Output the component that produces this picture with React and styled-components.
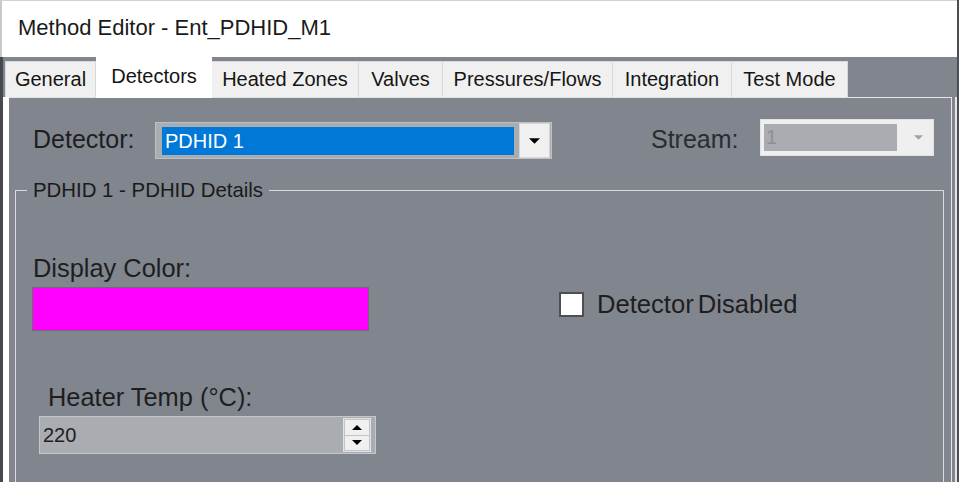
import React from 'react';
import styled, { createGlobalStyle } from 'styled-components';

const Global = createGlobalStyle`
  html, body { margin: 0; padding: 0; background: #80858e; }
  body { font-family: "Liberation Sans", Arial, sans-serif; color: #1f1f1f; }
  * { box-sizing: border-box; }
`;

const Window = styled.div`
  width: 959px;
  height: 482px;
  overflow: hidden;
  display: flex;
  flex-direction: column;
  background: #80858e;
  border-right: 2px solid #4b4e53;
`;

const TitleBar = styled.div`
  height: 57px;
  flex: none;
  background: #ffffff;
  border-top: 1px solid #d2d2d2;
  border-left: 2px solid #c9c9c9;
  display: flex;
  align-items: center;
  padding: 0 0 2px 16px;
  font-size: 22px;
  color: #1a1a1a;
`;

const Body = styled.div`
  flex: 1;
  display: flex;
  flex-direction: column;
  border-left: 3px solid #45494f;
  min-height: 0;
`;

const TabStrip = styled.div`
  height: 40px;
  flex: none;
  display: flex;
  align-items: flex-end;
  padding-left: 2px;
`;

const Tab = styled.div`
  position: relative;
  z-index: ${(p) => (p.$active ? 2 : 1)};
  width: ${(p) => p.$w}px;
  height: ${(p) => (p.$active ? 41 : 36)}px;
  margin-bottom: ${(p) => (p.$active ? -1 : 0)}px;
  background: ${(p) => (p.$active ? '#ffffff' : '#f0f0f0')};
  border: 1px solid ${(p) => (p.$active ? '#ffffff' : '#d9d9d9')};
  border-bottom: none;
  border-left-width: ${(p) => (p.$first || p.$active ? 1 : 0)}px;
  text-align: center;
  font-size: 20px;
  line-height: ${(p) => (p.$active ? 36 : 35)}px;
  color: #151515;
  white-space: nowrap;
`;

const PageArea = styled.div`
  flex: 1;
  display: flex;
  border-left: 6px solid #ffffff;
  border-right: 2px solid #e4e4e4;
  padding-right: 3px;
  min-height: 0;
`;

const Page = styled.div`
  flex: 1;
  display: flex;
  flex-direction: column;
  border-top: 1px solid #e4e4e4;
  border-right: 1px solid #e4e4e4;
  padding: 21px 0 0 6px;
  min-height: 0;
`;

const TopRow = styled.div`
  display: flex;
  align-items: flex-start;
  height: 41px;
  margin-left: 18px;
  flex: none;
`;

const FieldLabel = styled.div`
  width: ${(p) => p.$w}px;
  margin-left: ${(p) => p.$ml || 0}px;
  font-size: 25px;
  line-height: 40px;
  color: ${(p) => p.$color || '#1e1e1e'};
  white-space: nowrap;
`;

const Combo = styled.div`
  width: 397px;
  height: 37px;
  margin-top: 3px;
  display: flex;
  align-items: stretch;
  background: #a9acb1;
  border: 1px solid #bdc0c4;
  padding: 0 1px 0 6px;
`;

const SelectedField = styled.div`
  flex: 1;
  margin: 4px 5px 3px 0;
  background: #0078d7;
  color: #ffffff;
  font-size: 20px;
  line-height: 28px;
  padding-left: 3px;
`;

const DropButton = styled.div`
  width: 31px;
  background: #f0f0f0;
  border: 1px solid #d6d6d6;
  display: flex;
  align-items: center;
  justify-content: center;
`;

const StreamCombo = styled.div`
  width: 174px;
  height: 37px;
  display: flex;
  align-items: stretch;
  background: #efefef;
  border: 1px solid #e2e2e2;
  padding: 4px 0 4px 3px;
`;

const DisabledField = styled.div`
  width: 133px;
  background: #a9acb1;
  color: #8e9196;
  font-size: 20px;
  line-height: 27px;
  padding-left: 2px;
`;

const StreamArrow = styled.div`
  flex: 1;
  display: flex;
  align-items: center;
  justify-content: center;
  padding-left: 6px;
`;

const GroupBox = styled.fieldset`
  margin: 18px 0 0 0;
  padding: 0;
  width: 929px;
  flex: 1;
  min-width: 0;
  border: 1px solid #d9dadc;
  border-bottom: none;
`;

const GroupTitle = styled.legend`
  margin-left: 11px;
  padding: 0 6px;
  font-size: 20.4px;
  line-height: 24px;
  color: #1a1a1a;
`;

const GroupContent = styled.div`
  padding-left: 16px;
`;

const ColorRow = styled.div`
  display: flex;
  margin-top: 52px;
`;

const Column = styled.div`
  display: flex;
  flex-direction: column;
  margin-left: ${(p) => p.$ml || 0}px;
`;

const SectionLabel = styled.div`
  font-size: 25.4px;
  line-height: 28px;
  color: #1e1e1e;
  padding-left: ${(p) => p.$pl || 0}px;
  white-space: nowrap;
`;

const ColorSwatch = styled.div`
  width: 337px;
  height: 44px;
  margin-top: 5px;
  background: ${(p) => p.$color};
  border: 1px solid #6a6c70;
`;

const CheckRow = styled.label`
  display: flex;
  align-items: center;
  margin-left: 190px;
  padding-top: 36px;
  height: 64px;
`;

const CheckBox = styled.span`
  width: 25px;
  height: 25px;
  background: #ffffff;
  border: 2px solid #4d4f53;
  margin-right: 13px;
  flex: none;
`;

const CheckText = styled.span`
  font-size: 25.6px;
  line-height: 28px;
  color: #1e1e1e;
  word-spacing: -3px;
`;

const HeaterBlock = styled(Column)`
  margin-top: 52px;
  margin-left: 7px;
`;

const Numeric = styled.div`
  width: 337px;
  height: 38px;
  margin-top: 5px;
  display: flex;
  align-items: center;
  background: #a9acb1;
  border: 1px solid #c3c6ca;
  padding: 0 4px 0 3px;
`;

const NumericValue = styled.div`
  flex: 1;
  font-size: 20px;
  color: #1e1e1e;
`;

const Spin = styled.div`
  width: 28px;
  height: 34px;
  display: flex;
  flex-direction: column;
  border: 1px solid #e2e2e2;
  background: #f0f0f0;
`;

const SpinButton = styled.div`
  flex: 1;
  display: flex;
  align-items: center;
  justify-content: center;
  border: 1px solid #c4c4c4;
  border-top-width: ${(p) => (p.$down ? 0 : 1)}px;
  background: #f0f0f0;
`;

const Arrow = ({ up, color = '#000', w = 10, h = 5 }) => (
  <svg width={w} height={h} viewBox="0 0 10 5">
    {up ? <polygon points="0,5 10,5 5,0" fill={color} /> : <polygon points="0,0 10,0 5,5" fill={color} />}
  </svg>
);

const tabs = [
  { label: 'General', w: 91 },
  { label: 'Detectors', w: 116, active: true },
  { label: 'Heated Zones', w: 147 },
  { label: 'Valves', w: 84 },
  { label: 'Pressures/Flows', w: 170 },
  { label: 'Integration', w: 119 },
  { label: 'Test Mode', w: 116 },
];

export default function App() {
  return (
    <>
      <Global />
      <Window>
        <TitleBar>Method Editor - Ent_PDHID_M1</TitleBar>
        <Body>
          <TabStrip>
            {tabs.map((t, i) => (
              <Tab key={t.label} $w={t.w} $active={t.active} $first={i === 0}>
                {t.label}
              </Tab>
            ))}
          </TabStrip>
          <PageArea>
            <Page>
              <TopRow>
                <FieldLabel $w={122}>Detector:</FieldLabel>
                <Combo>
                  <SelectedField>PDHID 1</SelectedField>
                  <DropButton>
                    <Arrow w={11} h={6} />
                  </DropButton>
                </Combo>
                <FieldLabel $w={109} $ml={99} $color="#2a2c30">Stream:</FieldLabel>
                <StreamCombo>
                  <DisabledField>1</DisabledField>
                  <StreamArrow>
                    <Arrow color="#a3a3a3" w={9} h={5} />
                  </StreamArrow>
                </StreamCombo>
              </TopRow>
              <GroupBox>
                <GroupTitle>PDHID 1 - PDHID Details</GroupTitle>
                <GroupContent>
                  <ColorRow>
                    <Column>
                      <SectionLabel $pl={1}>Display Color:</SectionLabel>
                      <ColorSwatch $color="#ff00ff" />
                    </Column>
                    <CheckRow>
                      <CheckBox />
                      <CheckText>Detector Disabled</CheckText>
                    </CheckRow>
                  </ColorRow>
                  <HeaterBlock>
                    <SectionLabel $pl={9}>Heater Temp (°C):</SectionLabel>
                    <Numeric>
                      <NumericValue>220</NumericValue>
                      <Spin>
                        <SpinButton>
                          <Arrow up w={10} h={5} />
                        </SpinButton>
                        <SpinButton $down>
                          <Arrow w={10} h={5} />
                        </SpinButton>
                      </Spin>
                    </Numeric>
                  </HeaterBlock>
                </GroupContent>
              </GroupBox>
            </Page>
          </PageArea>
        </Body>
      </Window>
    </>
  );
}
